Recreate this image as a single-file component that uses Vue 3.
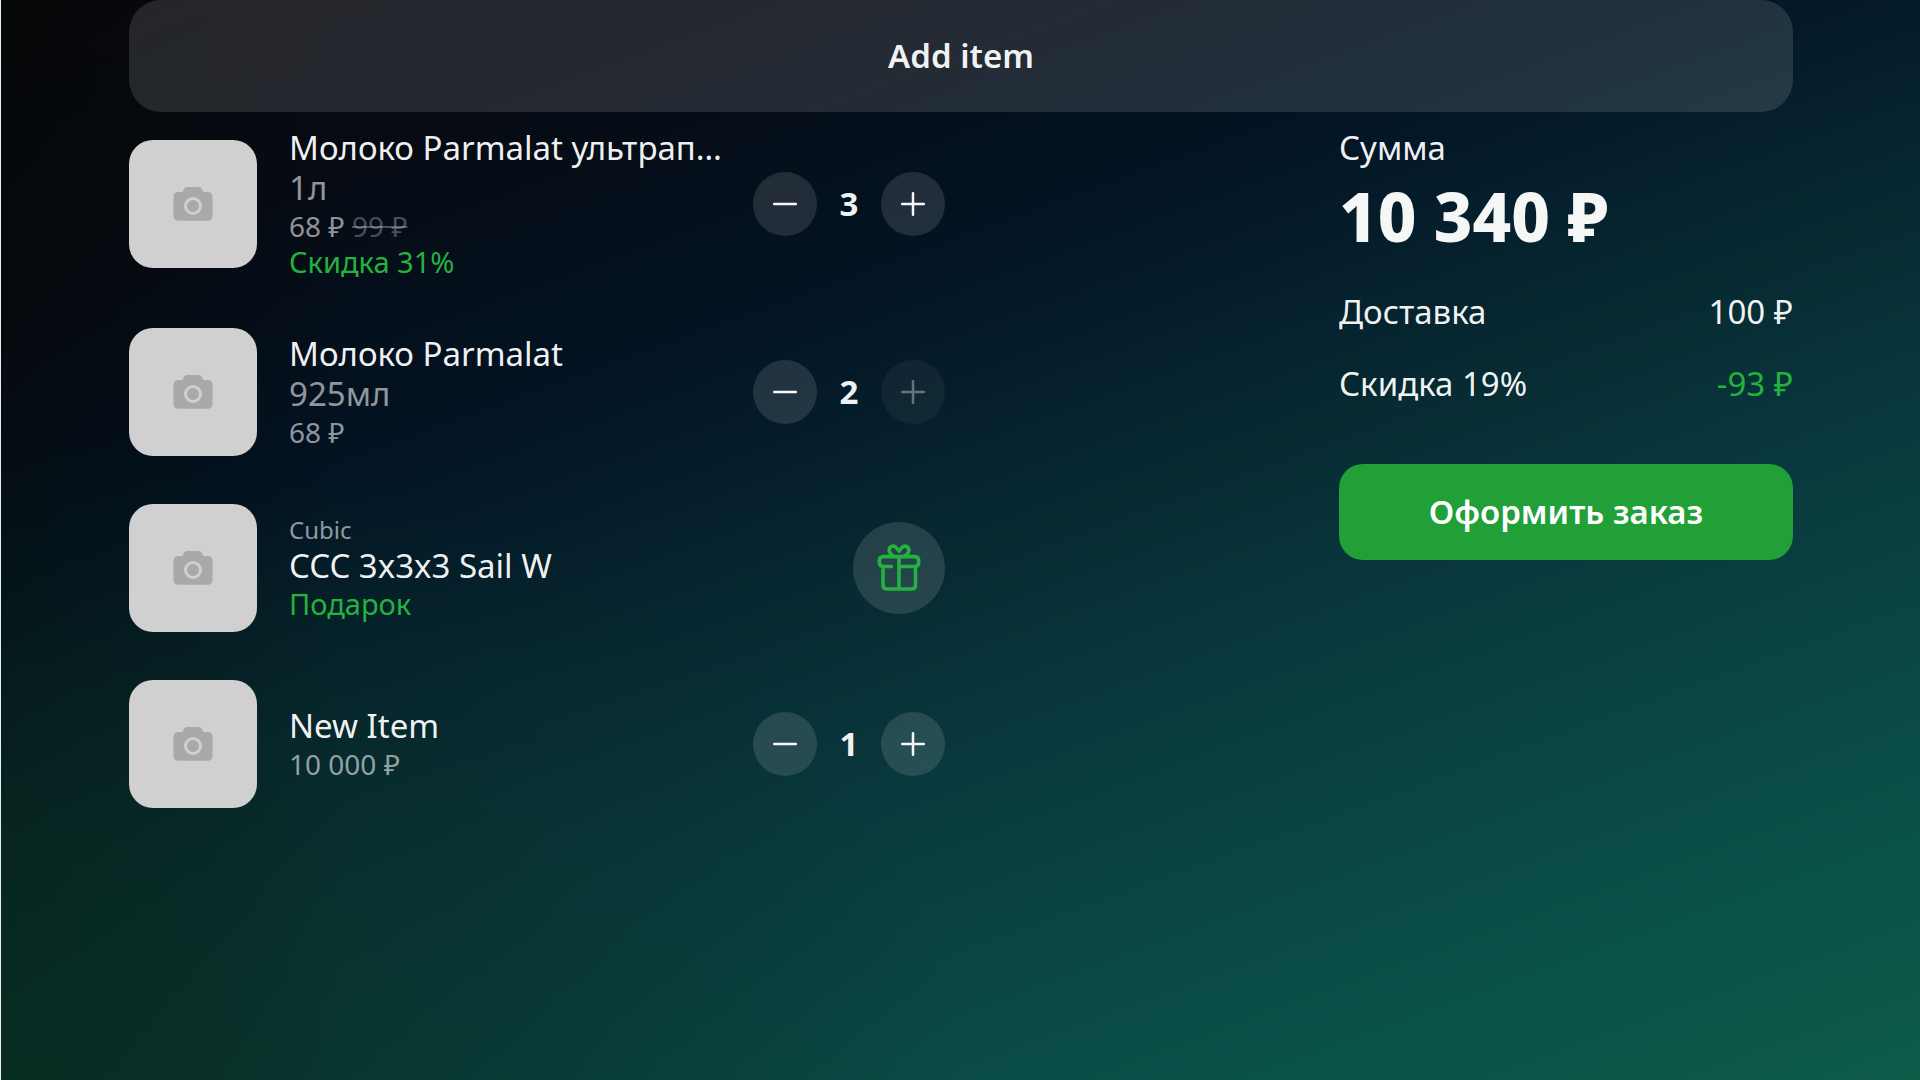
<script setup>
import { ref, computed } from 'vue'

const items = ref([
  { id: 1, title: 'Молоко Parmalat ультрапастеризованное', volume: '1л', price: '68 ₽', oldPrice: '99 ₽', note: 'Скидка 31%', count: 3, max: 10 },
  { id: 2, title: 'Молоко Parmalat', volume: '925мл', price: '68 ₽', count: 2, max: 2 },
  { id: 3, brand: 'Cubic', title: 'CCC 3x3x3 Sail W', note: 'Подарок', gift: true },
  { id: 4, title: 'New Item', price: '10 000 ₽', count: 1, max: 10 },
])
const total = computed(() => '10 340 ₽')
</script>

<template>
  <div class="page">
    <button class="add" type="button">Add item</button>
    <main class="cart">
      <ul class="items">
        <li v-for="item in items" :key="item.id" class="item">
          <div class="thumb">
            <svg class="camera" viewBox="0 0 48 48" aria-hidden="true">
              <path fill-rule="evenodd" d="M18 7h12q2 0 3 2l1.500 3H38.500q5 0 5 5v18.700q0 5-5 5h-29q-5 0-5-5V17q0-5 5-5h4L15 9q1-2 3-2ZM24 17a9 9 0 1 0 0 18 9 9 0 0 0 0-18Zm0 3a6 6 0 1 1 0 12 6 6 0 0 1 0-12Z" />
            </svg>
          </div>
          <div class="info">
            <span v-if="item.brand" class="brand">{{ item.brand }}</span>
            <span class="title">{{ item.title }}</span>
            <span v-if="item.volume" class="volume">{{ item.volume }}</span>
            <span v-if="item.price" class="price">{{ item.price }} <s v-if="item.oldPrice">{{ item.oldPrice }}</s></span>
            <span v-if="item.note" class="note">{{ item.note }}</span>
          </div>
          <div v-if="item.gift" class="gift">
            <svg viewBox="0 0 48 48" aria-hidden="true">
              <path d="M16.500 22.500H8.500q-4.200 0-4.200-4.200v-1.500q0-4.200 4.200-4.200h31q4.200 0 4.200 4.200v1.500q0 4.200-4.200 4.200H24M24 12.600V45M8 22.500V41q0 4 4 4h24.500q4 0 4-4V22.500" />
              <path d="M19 12.400C16 10.500 13.500 8 14.200 5.200 15 2 19 1 21.200 3.600L24 7.200l2.800-3.600C29 1 33 2 33.800 5.200 34.500 8 32 10.500 29 12.400" />
            </svg>
          </div>
          <div v-else class="stepper">
            <button type="button" aria-label="Меньше" @click="item.count--">
              <svg viewBox="0 0 32 32" aria-hidden="true"><path d="M5.200 16h21.600" /></svg>
            </button>
            <span class="count">{{ item.count }}</span>
            <button type="button" aria-label="Больше" :disabled="item.count >= item.max" @click="item.count++">
              <svg viewBox="0 0 32 32" aria-hidden="true"><path d="M5.200 16h21.600M16 5.200v21.600" /></svg>
            </button>
          </div>
        </li>
      </ul>
      <aside class="summary">
        <span class="label">Сумма</span>
        <strong class="total">{{ total }}</strong>
        <dl class="rows">
          <div class="row"><dt>Доставка</dt><dd>100 ₽</dd></div>
          <div class="row"><dt>Скидка 19%</dt><dd class="discount">-93 ₽</dd></div>
        </dl>
        <button class="checkout" type="button">Оформить заказ</button>
      </aside>
    </main>
  </div>
</template>

<style>
body { background: #000; }
</style>

<style scoped>
.page {
  box-sizing: border-box;
  min-height: 100vh;
  padding: 0 127px 48px 128px;
  border-left: 1px solid #e8ecee;
  background:
    radial-gradient(50% 60% at 0% 100%, rgba(8, 46, 32, 0.8) 0%, rgba(8, 46, 36, 0) 100%),
    linear-gradient(90deg, rgba(4, 6, 2, 0.35) 0%, rgba(4, 6, 2, 0) 18%),
    linear-gradient(160deg, #07080c 0%, #060b14 17%, #031424 34%, #072a33 51%, #09393e 63%, #0a4a45 79%, #0a5248 87%, #0d5c48 100%);
  color: rgba(255, 255, 255, 0.96);
  font: 33px/40px "Noto Sans", sans-serif;
}
button {
  border: 0;
  color: inherit;
  font: inherit;
  cursor: pointer;
}
.add {
  display: block;
  width: 100%;
  padding: 36px;
  border-radius: 32px;
  background: rgba(255, 255, 255, 0.12);
  font-weight: 600;
}
.cart {
  display: grid;
  grid-template-columns: minmax(0, 816fr) minmax(0, 394fr) minmax(0, 454fr);
  padding-top: 16px;
}
.items {
  display: flex;
  flex-direction: column;
  gap: 48px;
  margin: 0;
  padding: 0;
  list-style: none;
}
.item {
  display: flex;
  align-items: center;
}
.thumb {
  display: flex;
  flex: none;
  align-items: center;
  justify-content: center;
  width: 128px;
  height: 128px;
  margin-right: 32px;
  border-radius: 24px;
  background: #d0d0d0;
}
.camera {
  width: 48px;
  height: 48px;
  fill: #aaa8a9;
}
.info {
  display: flex;
  flex: 1;
  flex-direction: column;
  min-width: 0;
}
.title {
  overflow: hidden;
  text-overflow: ellipsis;
  white-space: nowrap;
}
.brand {
  color: rgba(255, 255, 255, 0.56);
  font-size: 24px;
  line-height: 32px;
}
.volume { color: rgba(255, 255, 255, 0.56); }
.price {
  color: rgba(255, 255, 255, 0.56);
  font-size: 28px;
  line-height: 36px;
}
.price s { color: rgba(255, 255, 255, 0.28); }
.note {
  color: #24b23e;
  font-size: 29px;
  line-height: 36px;
}
.stepper {
  display: flex;
  align-items: center;
  margin-left: 16px;
}
.stepper button {
  display: flex;
  align-items: center;
  justify-content: center;
  width: 64px;
  height: 64px;
  padding: 0;
  border-radius: 50%;
  background: rgba(255, 255, 255, 0.12);
}
.stepper button:disabled { opacity: 0.4; }
.stepper svg {
  width: 32px;
  height: 32px;
  fill: none;
  stroke: currentColor;
  stroke-width: 2.500;
  stroke-linecap: round;
}
.count {
  width: 64px;
  font-weight: 700;
  text-align: center;
}
.gift {
  display: flex;
  align-items: center;
  justify-content: center;
  width: 92px;
  height: 92px;
  border-radius: 50%;
  background: rgba(255, 255, 255, 0.12);
}
.gift svg {
  width: 48px;
  height: 48px;
  fill: none;
  stroke: #24b23e;
  stroke-width: 3.600;
  stroke-linecap: round;
  stroke-linejoin: round;
}
.summary {
  display: flex;
  grid-column: 3;
  flex-direction: column;
}
.total {
  margin-top: 12px;
  font-size: 67px;
  font-weight: 800;
  line-height: 72px;
}
.rows {
  display: flex;
  flex-direction: column;
  gap: 32px;
  margin: 40px 0 60px;
}
.row {
  display: flex;
  justify-content: space-between;
}
.row dd { margin: 0; }
.discount { color: #24b23e; }
.checkout {
  padding: 28px;
  border-radius: 24px;
  background: #21a038;
  color: #fff;
  font-weight: 600;
}
</style>
